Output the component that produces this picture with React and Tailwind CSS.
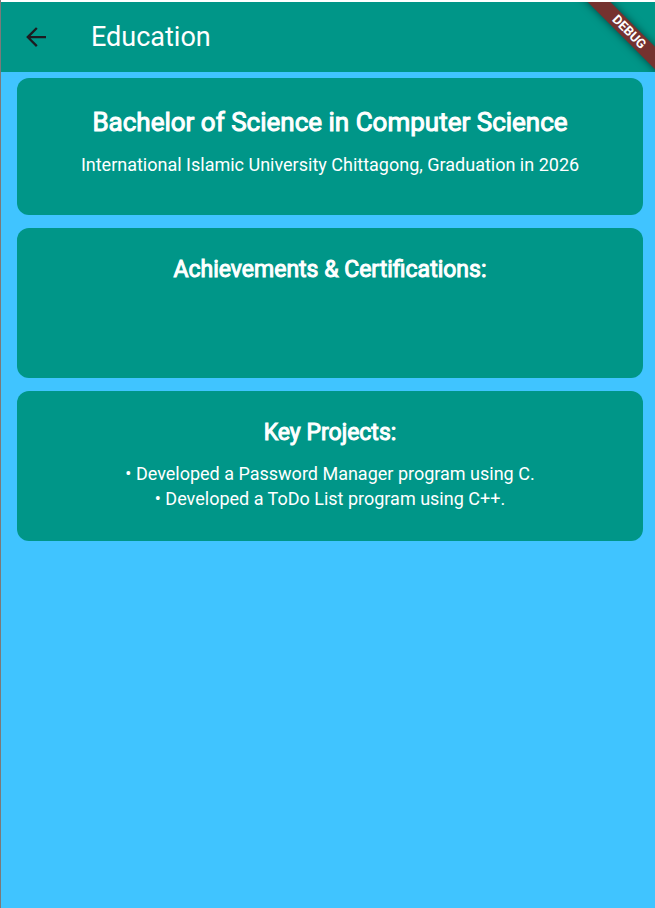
function Card({ title, size, className, children }) {
  return (
    <section className={"flex flex-col items-center rounded-xl bg-[#009688] px-4 text-center " + className}>
      <h2 className={"font-normal [-webkit-text-stroke:1px_white] " + size}>{title}</h2>
      {children}
    </section>
  );
}

export default function App() {
  return (
    <div className="min-h-screen overflow-hidden border-l border-[#7a7a7a] bg-[#40c4ff] font-[Roboto,sans-serif] text-white">
      <header className="relative flex h-18 items-center gap-[43px] overflow-hidden border-t-2 border-white bg-[#009688] pl-[23px]">
        <button type="button" aria-label="Back" className="text-[#1d1b20]">
          <svg viewBox="4 4 16 16" className="size-6 p-0.5" fill="currentColor">
            <path d="M20 11.1H7.6l5.7-5.7L12 4.1 4.1 12l7.9 7.9 1.3-1.3-5.7-5.7H20z" />
          </svg>
        </button>
        <h1 className="text-[27px]">Education</h1>
        <div className="absolute -right-[38px] top-[22px] w-32 rotate-45 bg-[#75322f] text-center text-[13px] leading-4 font-bold shadow-[0_0_8px_#0008]">DEBUG</div>
      </header>
      <main className="flex flex-col gap-[13px] px-4 pt-1.5 pr-3">
        <Card title="Bachelor of Science in Computer Science" size="text-[26px] leading-8" className="min-h-[137px] pt-7">
          <p className="mt-3.5 text-lg leading-[25px]">International Islamic University Chittagong, Graduation in 2026</p>
        </Card>
        <Card title="Achievements & Certifications:" size="text-[23px] leading-7" className="min-h-[150px] pt-7" />
        <Card title="Key Projects:" size="text-[23px] leading-7" className="min-h-[150px] pt-7">
          <ul className="mt-3.5 text-lg leading-[25px]">
            <li>• Developed a Password Manager program using C.</li>
            <li>• Developed a ToDo List program using C++.</li>
          </ul>
        </Card>
      </main>
    </div>
  );
}
